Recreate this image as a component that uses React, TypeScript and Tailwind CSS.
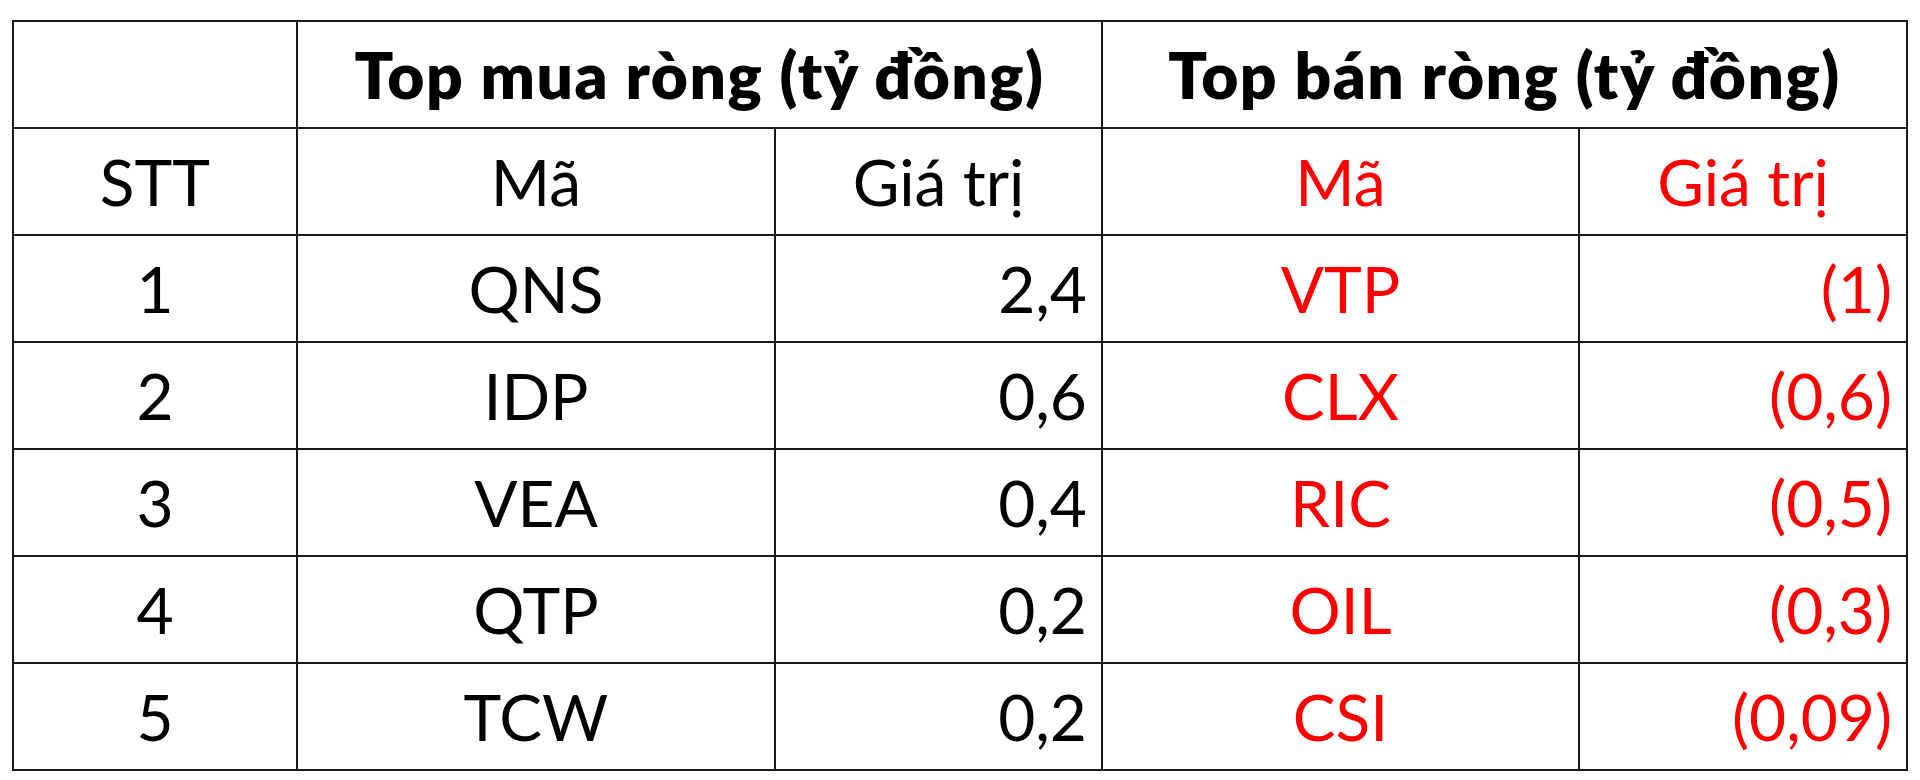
const buys = [
  { stt: 1, code: 'QNS', value: '2,4' },
  { stt: 2, code: 'IDP', value: '0,6' },
  { stt: 3, code: 'VEA', value: '0,4' },
  { stt: 4, code: 'QTP', value: '0,2' },
  { stt: 5, code: 'TCW', value: '0,2' },
];

const sells = [
  { code: 'VTP', value: '(1)' },
  { code: 'CLX', value: '(0,6)' },
  { code: 'RIC', value: '(0,5)' },
  { code: 'OIL', value: '(0,3)' },
  { code: 'CSI', value: '(0,09)' },
];

const cell = 'border-2 border-[#1a1a1a] h-[107px] p-0 align-middle';

export default function App() {
  return (
    <div className="w-[1920px] h-[780px] bg-white pt-[20px] pl-[12px] font-['Lato','Liberation_Sans',sans-serif] text-black">
      <table className="border-collapse table-fixed w-[1894px] text-[64px] leading-none">
        <colgroup>
          <col className="w-[284px]" />
          <col className="w-[478px]" />
          <col className="w-[327px]" />
          <col className="w-[477px]" />
          <col className="w-[328px]" />
        </colgroup>
        <thead>
          <tr>
            <th className={cell}></th>
            <th colSpan={2} className={`${cell} font-extrabold tracking-[1.5px] text-center`}>
              Top mua ròng (tỷ đồng)
            </th>
            <th colSpan={2} className={`${cell} font-extrabold tracking-[1.5px] text-center`}>
              Top bán ròng (tỷ đồng)
            </th>
          </tr>
          <tr>
            <th className={`${cell} font-normal text-center`}>STT</th>
            <th className={`${cell} font-normal text-center`}>Mã</th>
            <th className={`${cell} font-normal text-center`}>Giá trị</th>
            <th className={`${cell} font-normal text-center text-[#ff0000]`}>Mã</th>
            <th className={`${cell} font-normal text-center text-[#ff0000]`}>Giá trị</th>
          </tr>
        </thead>
        <tbody>
          {buys.map((b, i) => (
            <tr key={b.stt}>
              <td className={`${cell} text-center`}>{b.stt}</td>
              <td className={`${cell} text-center`}>{b.code}</td>
              <td className={`${cell} text-right pr-[14px]`}>{b.value}</td>
              <td className={`${cell} text-center text-[#ff0000]`}>{sells[i].code}</td>
              <td className={`${cell} text-right pr-[14px] text-[#ff0000]`}>{sells[i].value}</td>
            </tr>
          ))}
        </tbody>
      </table>
    </div>
  );
}
